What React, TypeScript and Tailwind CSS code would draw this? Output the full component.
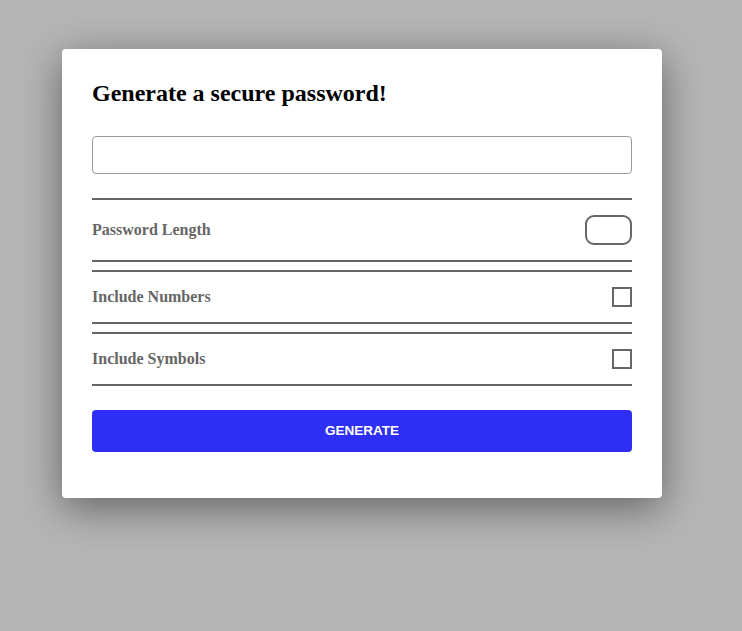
export default function App() {
  return (
    <div className="min-h-[631px] bg-[#b5b5b5] pt-[49px] pl-[62px]">
      <div className="w-[600px] h-[449px] bg-white rounded-[4px] shadow-[0_10px_40px_rgba(0,0,0,0.45)] px-[30px] pt-[30px] font-['Liberation_Serif',serif]">
        {/* Title */}
        <h2 className="text-[24px] font-bold text-black leading-[28px]">
          Generate a secure password!
        </h2>

        {/* Output */}
        <input
          type="text"
          readOnly
          className="mt-[29px] block w-full h-[38px] border border-[#9a9a9a] rounded-[4px] outline-none"
        />

        {/* Options */}
        <div className="mt-[24px] flex flex-col gap-[8px]">
          <div className="flex items-center justify-between border-y-2 border-[#666] h-[64px]">
            <span className="text-[16px] font-bold text-[#666]">Password Length</span>
            <div className="w-[47px] h-[30px] border-2 border-[#666] rounded-[9px]" />
          </div>
          <div className="flex items-center justify-between border-y-2 border-[#666] h-[54px]">
            <span className="text-[16px] font-bold text-[#666]">Include Numbers</span>
            <div className="w-[20px] h-[20px] border-2 border-[#666]" />
          </div>
          <div className="flex items-center justify-between border-y-2 border-[#666] h-[54px]">
            <span className="text-[16px] font-bold text-[#666]">Include Symbols</span>
            <div className="w-[20px] h-[20px] border-2 border-[#666]" />
          </div>
        </div>

        {/* Action */}
        <button className="mt-[24px] w-full h-[42px] bg-[#2e2ef5] rounded-[4px] text-white text-[13.5px] font-bold font-['Liberation_Sans',sans-serif]">
          GENERATE
        </button>
      </div>
    </div>
  );
}
